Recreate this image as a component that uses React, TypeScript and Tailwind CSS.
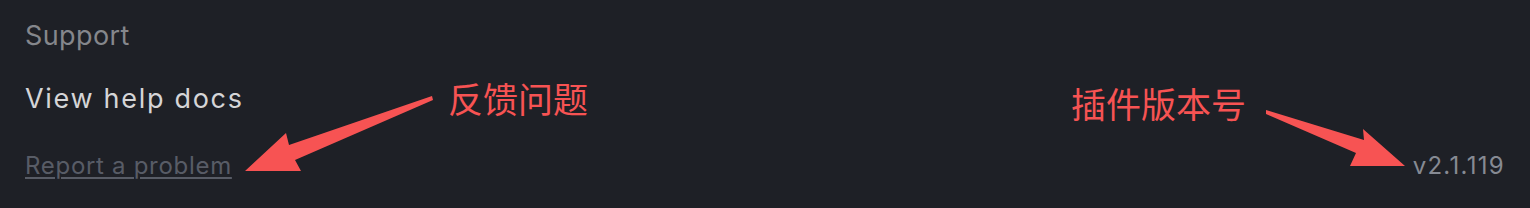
export default function App(): JSX.Element {
  return (
    <div className="relative h-[208px] w-[1530px] overflow-hidden bg-[#1e2026] font-['Inter','Liberation_Sans',sans-serif]">
      <div className="flex flex-col px-[25px] pt-[19px]">
        <p className="text-[27px] leading-[34px] tracking-[0.4px] text-[#85878c]">
          Support
        </p>
        <a className="mt-[29px] text-[27px] leading-[34px] tracking-[1.7px] text-[#d5d5d7]">
          View help docs
        </a>
        <div className="mt-[35px] flex items-baseline justify-between">
          <a className="text-[24px] leading-[30px] tracking-[0.7px] text-[#585c66] underline decoration-[2px] underline-offset-[3px]">
            Report a problem
          </a>
          <span className="text-[24px] leading-[30px] tracking-[1.3px] text-[#868a93]">
            v2.1.119
          </span>
        </div>
      </div>

      {/* annotations */}
      <svg
        className="pointer-events-none absolute left-0 top-0"
        width="1530"
        height="208"
        viewBox="0 0 1530 208"
      >
        <path
          d="M245 171 L286 133 L289 145 L432 96 L433 100 L295 160 L301 171 Z"
          fill="#f75353"
        />
        <path
          d="M1405 166 L1363 129 L1364 140 L1266 110 L1266 114 L1356 153 L1350 166 Z"
          fill="#f75353"
        />
      </svg>
      <span className="absolute left-[448px] top-[80px] font-['Noto_Sans_CJK_SC',sans-serif] text-[35px] font-normal leading-none text-[#f75353]">
        反馈问题
      </span>
      <span className="absolute left-[1071px] top-[85px] font-['Noto_Sans_CJK_SC',sans-serif] text-[35px] font-normal leading-none text-[#f75353]">
        插件版本号
      </span>
    </div>
  );
}
